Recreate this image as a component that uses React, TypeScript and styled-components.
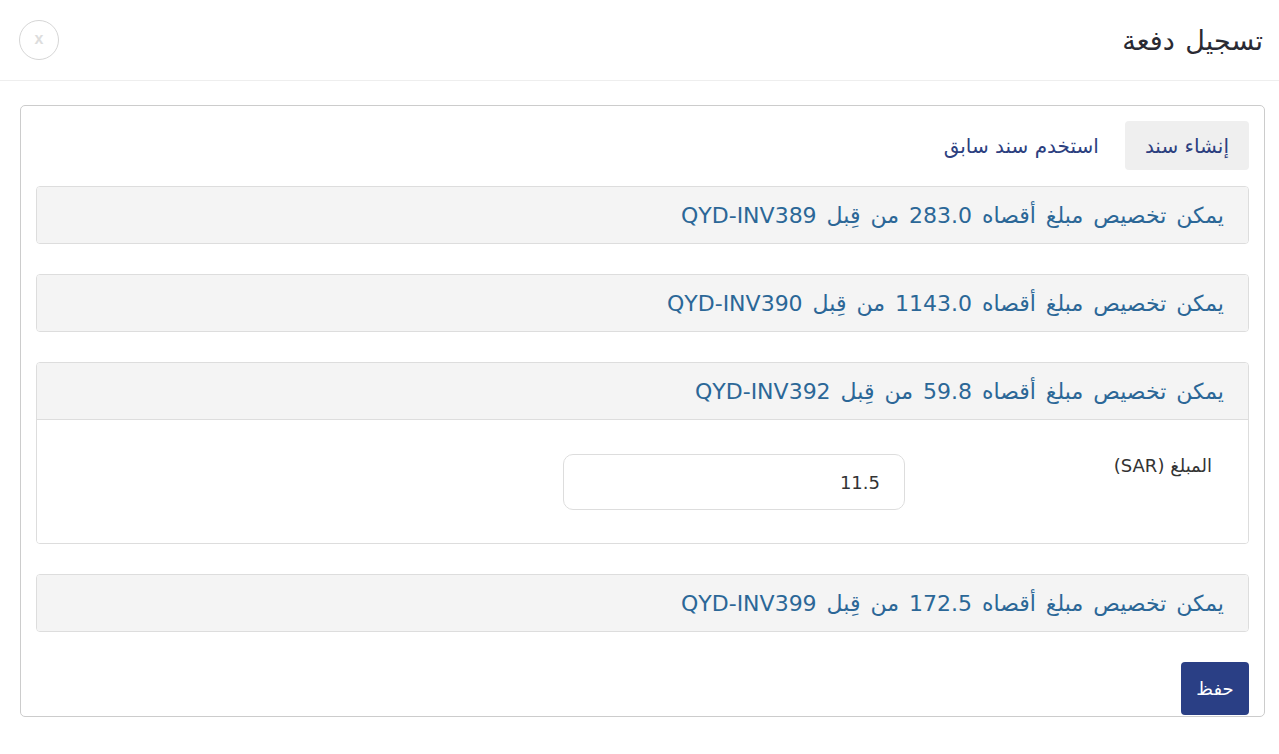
import React, { useState } from 'react';
import styled, { createGlobalStyle } from 'styled-components';

const GlobalStyle = createGlobalStyle`
	html, body {
		margin: 0;
		padding: 0;
		background: #ffffff;
	}
	body {
		font-family: "DejaVu Sans", "Noto Sans", sans-serif;
		direction: rtl;
	}
`;

const Modal = styled.div`
	width: 1279px;
	min-height: 754px;
	background: #ffffff;
`;

const Header = styled.header`
	height: 81px;
	display: flex;
	align-items: center;
	justify-content: space-between;
	padding: 0 16px 0 19px;
	border-bottom: 1px solid #eeeeee;
	box-sizing: border-box;
`;

const Title = styled.h4`
	margin: 0;
	font-size: 27px;
	font-weight: 400;
	color: #2a2a33;
	word-spacing: 2px;
`;

const CloseButton = styled.button`
	width: 40px;
	height: 40px;
	border-radius: 50%;
	border: 1px solid #d6d6d6;
	background: #ffffff;
	color: #dddddd;
	font-family: "Liberation Sans", sans-serif;
	font-size: 16px;
	font-weight: 700;
	display: flex;
	align-items: center;
	justify-content: center;
	padding: 0 0 2px;
	cursor: pointer;
`;

const Body = styled.div`
	padding: 24px 14px 0 20px;
`;

const Panel = styled.div`
	border: 1px solid #cccccc;
	border-radius: 5px;
	padding: 15px 15px 0 15px;
	display: flex;
	flex-direction: column;
`;

const Tabs = styled.div`
	display: flex;
	gap: 26px;
	align-items: center;
	margin-bottom: 16px;
`;

const Tab = styled.button<{ $active?: boolean }>`
	height: 49px;
	padding: ${(p) => (p.$active ? '0 20px' : '0')};
	border: 0;
	border-radius: 4px;
	background: ${(p) => (p.$active ? '#efefef' : 'transparent')};
	color: #2c3f7f;
	font-family: inherit;
	font-size: 20px;
	cursor: pointer;
`;

const Item = styled.div`
	border: 1px solid #dddddd;
	border-radius: 4px;
	margin-bottom: 30px;
	overflow: hidden;
`;

const ItemHeader = styled.div<{ $open?: boolean }>`
	height: 56px;
	display: flex;
	align-items: center;
	padding: 0 24px;
	background: #f4f4f4;
	color: #2b6797;
	font-size: 22px;
	word-spacing: 3px;
	cursor: pointer;
	border-bottom: ${(p) => (p.$open ? '1px solid #dddddd' : '0')};
`;

const ItemBody = styled.div`
	display: flex;
	align-items: flex-start;
	padding: 34px 36px 33px 0;
	background: #ffffff;
`;

const Label = styled.label`
	width: 307px;
	padding-top: 1px;
	font-size: 18px;
	color: #333333;
`;

const Input = styled.input`
	width: 342px;
	height: 56px;
	box-sizing: border-box;
	border: 1px solid #dddddd;
	border-radius: 10px;
	padding: 0 24px;
	font-family: inherit;
	font-size: 18px;
	color: #333333;
	direction: rtl;
	outline: none;
`;

const Footer = styled.div`
	display: flex;
	margin-bottom: 1px;
`;

const SaveButton = styled.button`
	width: 68px;
	height: 53px;
	border: 0;
	border-radius: 4px;
	background: #2a3f85;
	color: #ffffff;
	font-family: inherit;
	font-size: 18px;
	cursor: pointer;
`;

const invoices = [
	{ id: 'QYD-INV389', max: '283.0' },
	{ id: 'QYD-INV390', max: '1143.0' },
	{ id: 'QYD-INV392', max: '59.8' },
	{ id: 'QYD-INV399', max: '172.5' },
];

function App() {
	const [open, setOpen] = useState('QYD-INV392');
	const [tab, setTab] = useState(0);

	return (
		<Modal>
			<GlobalStyle />
			<Header>
				<Title>تسجيل دفعة</Title>
				<CloseButton aria-label="close">x</CloseButton>
			</Header>
			<Body>
				<Panel>
					<Tabs>
						<Tab $active={tab === 0} onClick={() => setTab(0)}>إنشاء سند</Tab>
						<Tab $active={tab === 1} onClick={() => setTab(1)}>استخدم سند سابق</Tab>
					</Tabs>
					{invoices.map((inv) => (
						<Item key={inv.id}>
							<ItemHeader $open={open === inv.id} onClick={() => setOpen(inv.id)}>
								يمكن تخصيص مبلغ أقصاه {inv.max} من قِبل {inv.id}
							</ItemHeader>
							{open === inv.id && (
								<ItemBody>
									<Label>المبلغ (SAR)</Label>
									<Input defaultValue="11.5" />
								</ItemBody>
							)}
						</Item>
					))}
					<Footer>
						<SaveButton>حفظ</SaveButton>
					</Footer>
				</Panel>
			</Body>
		</Modal>
	);
}

export default App;
